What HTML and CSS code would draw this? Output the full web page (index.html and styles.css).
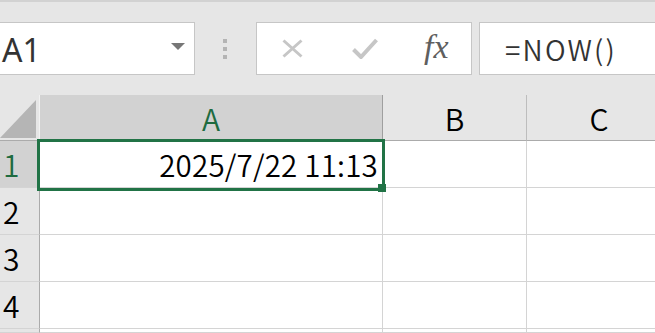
FILE: index.html
```html
<!DOCTYPE html>
<html lang="ja">
<head>
  <meta charset="UTF-8">
  <title>Book1 - Excel</title>
  <link rel="stylesheet" href="styles.css">
</head>
<body>
  <div class="ribbon-edge"></div>

  <div class="formula-bar">
    <div class="name-box">
      <span class="name-text">A1</span>
      <svg class="name-arrow" width="14" height="7" viewBox="0 0 14 7"><polygon points="0,0 14,0 7,7" fill="#777"/></svg>
    </div>
    <div class="grip"><i></i><i></i><i></i></div>
    <div class="fx-buttons">
      <svg width="21" height="19" viewBox="0 0 21 19">
        <path d="M1.5 1.5 L19.5 17.5 M19.5 1.5 L1.5 17.5" stroke="#c6c6c6" stroke-width="3" fill="none"/>
      </svg>
      <svg width="26" height="21" viewBox="0 0 26 21">
        <path d="M1.5 11.5 L9 19 L24.5 2" stroke="#c6c6c6" stroke-width="4" fill="none"/>
      </svg>
      <span class="fx">fx</span>
    </div>
    <div class="formula-input">=NOW()</div>
  </div>

  <div class="sheet">
    <div class="grid">
      <div class="corner">
        <svg width="36" height="38" viewBox="0 0 36 38"><polygon points="0,38 36,0 36,38" fill="#b5b5b5"/></svg>
      </div>
      <div class="col-head active">A</div>
      <div class="col-head">B</div>
      <div class="col-head">C</div>

      <div class="row-head active">1</div>
      <div class="cell num">2025/7/22 11:13</div>
      <div class="cell"></div>
      <div class="cell"></div>

      <div class="row-head">2</div>
      <div class="cell"></div>
      <div class="cell"></div>
      <div class="cell"></div>

      <div class="row-head">3</div>
      <div class="cell"></div>
      <div class="cell"></div>
      <div class="cell"></div>

      <div class="row-head">4</div>
      <div class="cell"></div>
      <div class="cell"></div>
      <div class="cell"></div>

      <!-- row 5 only peeks in at the bottom edge -->
      <div class="row-head"></div>
      <div class="cell"></div>
      <div class="cell"></div>
      <div class="cell"></div>
    </div>

    <div class="selection"></div>
    <div class="fill-handle"></div>
  </div>
</body>
</html>
```

FILE: styles.css
```css
body {
  margin: 0;
  width: 655px;
  height: 333px;
  overflow: hidden;
  background-color: #e6e6e6;
  font-family: "Noto Sans CJK JP", "Noto Sans", sans-serif;
  color: #000;
}

.ribbon-edge {
  height: 2px;
  background-color: #d2d2d2;
}

/* formula bar */

.formula-bar {
  display: flex;
  height: 53px;
  margin-top: 20px;
}

.name-box {
  box-sizing: border-box;
  width: 197px;
  margin-left: -2px;
  padding: 0 9px 0 3px;
  display: flex;
  align-items: center;
  justify-content: space-between;
  background-color: #fff;
  border: 1px solid #c6c6c6;
}

.name-text {
  font-family: "Noto Sans", sans-serif;
  font-size: 32px;
  color: #333;
  line-height: 1;
  margin-top: 2px;
}

.name-arrow {
  margin-top: -5px;
}

.grip {
  width: 4px;
  margin: 0 29px 0 28px;
  display: flex;
  flex-direction: column;
  justify-content: center;
  gap: 4px;
}

.grip i {
  display: block;
  width: 4px;
  height: 4px;
  background-color: #b4b4b4;
}

.fx-buttons {
  box-sizing: border-box;
  width: 216px;
  padding-left: 25px;
  display: flex;
  align-items: center;
  gap: 49px;
  background-color: #fff;
  border: 1px solid #c6c6c6;
}

.fx {
  font-family: "Liberation Serif", serif;
  font-style: italic;
  font-size: 34px;
  color: #5f5f5f;
  margin-left: -3px;
  margin-top: -3px;
}

.formula-input {
  box-sizing: border-box;
  flex: 1;
  margin: 0 -10px 0 7px;
  padding-left: 25px;
  display: flex;
  align-items: center;
  background-color: #fff;
  border: 1px solid #c6c6c6;
  font-size: 28px;
  font-weight: 350;
  letter-spacing: 2.2px;
  color: #333;
}

/* sheet grid */

.sheet {
  position: relative;
  margin-top: 20px;
}

.grid {
  display: grid;
  grid-template-columns: 40px 343px 144px 145px;
  grid-template-rows: 46px repeat(4, 47px) 4px;
  overflow: hidden;
}

.grid > div {
  box-sizing: border-box;
  border-right: 1px solid #d4d4d4;
  border-bottom: 1px solid #d4d4d4;
}

.corner {
  display: flex;
  align-items: flex-end;
  padding-bottom: 2px;
  border-right-color: #f2f2f2 !important;
  border-bottom-color: #ababab !important;
}

.col-head {
  display: flex;
  align-items: center;
  justify-content: center;
  font-size: 30px;
  font-weight: 350;
  border-right-color: #bdbdbd !important;
  border-bottom-color: #ababab !important;
}

.row-head {
  display: flex;
  align-items: center;
  padding-left: 3px;
  font-size: 30px;
  font-weight: 350;
  border-right-color: #ababab !important;
}

.col-head.active,
.row-head.active {
  background-color: #d2d2d2;
  color: #1e6b40;
}

.col-head.active {
  border-right-color: #9f9f9f !important;
}

.cell {
  background-color: #fff;
}

.cell.num {
  display: flex;
  align-items: center;
  justify-content: flex-end;
  padding-right: 4px;
  font-size: 29.5px;
  font-weight: 350;
  letter-spacing: 0.2px;
}

.selection {
  position: absolute;
  left: 37px;
  top: 44px;
  width: 348px;
  height: 52px;
  box-sizing: border-box;
  border: 3px solid #217346;
}

.fill-handle {
  position: absolute;
  left: 378px;
  top: 89px;
  width: 8px;
  height: 8px;
  background-color: #217346;
}
```
